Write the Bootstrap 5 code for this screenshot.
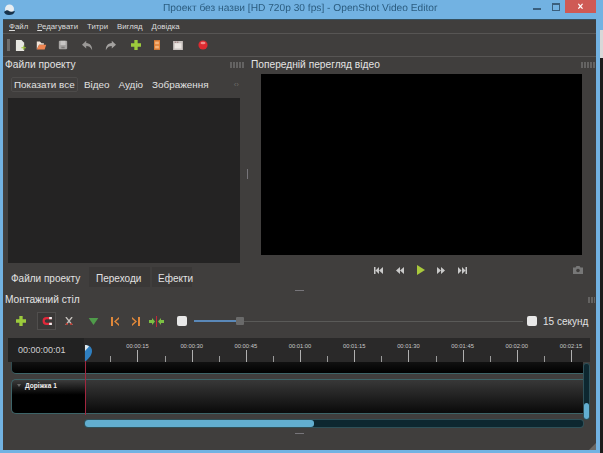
<!DOCTYPE html>
<html lang="uk">
<head>
  <meta charset="UTF-8">
  <meta name="viewport" content="width=device-width, initial-scale=1.0">
  <title>OpenShot Video Editor</title>
  <link href="https://cdn.jsdelivr.net/npm/bootstrap@5.3.0/dist/css/bootstrap.min.css" rel="stylesheet">
  <style>
    html, body { height: 100%; }
    body {
      background: #72b2e2;
      font-family: "Liberation Sans", "Noto Sans", sans-serif;
      color: #e2e2e2;
      overflow: hidden;
      width: 603px;
      height: 453px;
    }
    .side-strip {
      width: 3px;
      height: 453px;
      background: linear-gradient(#72b2e2 0 30px, #d8d8d8 30px 58px, #1c1c1c 58px);
    }
    .win { width: 600px; height: 453px; filter: blur(.35px); }
    .titlebar { height: 19px; padding-left: 3px; padding-right: 4px; }
    .win-title {
      font-size: 10.2px;
      text-rendering: geometricPrecision;
      line-height: 18px;
      color: #2c5d80;
      padding-left: 147px;
      white-space: nowrap;
    }
    .win-btn-min { width: 8px; height: 2px; background: #3a5f7d; margin: 8px 11px 0 0; }
    .win-btn-max { width: 8px; height: 8px; border: 1px solid #3a5f7d; border-top-width: 2px; margin: 3px 5px 0 0; }
    .win-btn-close {
      width: 31px; height: 13px; background: #cf5a55; color: #fff;
      font-size: 10px; line-height: 13px; font-weight: 700;
    }
    .shell {
      width: 593px;
      height: 431px;
      margin-left: 3px;
      background: #403e3d;
      position: relative;
      border-top: 1px solid #35505f;
    }
    .menu-row { height: 14px; gap: 9px; padding-left: 6px; font-size: 7.8px; line-height: 14px; border-bottom: 1px solid #575554; color: #dcdcdc; }
    .menu-row u { text-underline-offset: 1px; }
    .tool-row { height: 23px; border-bottom: 1px solid #575554; position: relative; }
    .grip { width: 3px; height: 12px; background: #6e6c6a; margin-left: 4px; }
    .tool-slot { width: 21px; height: 14px; align-items: center; }
    .tool-gap { margin-left: 2px; }
    .docks { height: 233px; }
    .dock-left { width: 242px; }
    .dock-sep { width: 4px; }
    .dock-sep-mark { width: 1px; height: 10px; background: #77757a; }
    .dock-right { width: 347px; }
    .dock-head { height: 14px; padding-top: 2px; font-size: 10.2px; line-height: 12px; padding-left: 2px; color: #e4e4e4; white-space: nowrap; }
    .float-marks { width: 14px; height: 6px; opacity: .4; margin-right: 1px;
      background: repeating-linear-gradient(90deg, #9a9a9a 0 2px, transparent 2px 3px); }
    .float-one { width: 7px; margin-top: -1px; }
    .filter-row { margin: 6px 0 0 8px; height: 15px; gap: 6px; font-size: 9.9px; line-height: 15px; white-space: nowrap; }
    .filter-on { width: 67px; border: 1px solid #4d4b4a; border-radius: 2px; padding: 0 2px; line-height: 13px; }
    .filter-tab { margin-left: 3px; }
    .filter-more { color: #6c6a68; font-size: 8px; margin-right: 6px; }
    .files-box { margin: 6px 0 0 5px; width: 232px; height: 165px; background: #242323; }
    .tab-row { margin-left: 5px; height: 24px; font-size: 10px; }
    .tab-item { margin-top: 4px; padding: 5px 6px 0; line-height: 14px; white-space: nowrap; height: 20px; }
    .tab-on { width: 81px; padding-left: 3px; }
    .tab-other { background: #3a3837; }
    .tab-two { width: 61px; padding-left: 7px; }
    .tab-three { width: 40px; margin-left: 2px; }
    .video-box { margin: 3px 0 0 12px; width: 321px; height: 181px; background: #000; }
    .player-row { height: 16px; margin-top: 7px; position: relative; }
    .player-btns { margin-left: 125px; gap: 12px; }
    .cam-slot { margin-left: auto; margin-right: 13px; }
    .hsplit { height: 1px; width: 9px; background: #77757a; margin: 0 auto; }
    .handle-row { height: 3px; }
    .tl-head { height: 14px; margin-top: -1px; padding-top: 2px; font-size: 10.2px; line-height: 12px; padding-left: 2px; color: #e4e4e4; }
    .tl-tools { height: 20px; margin-top: 5px; padding-left: 7px; }
    .tl-slot { width: 21px; height: 18px; }
    .tl-slot-on { border: 1px solid #504e4d; background: #3a3837; width: 19px; margin: 0 2px 0 6px; }
    .zoom-knob { width: 10px; height: 10px; background: #e8e8e8; border-radius: 2px; }
    .zoom-first { margin-left: 10px; }
    .zoom-line { height: 1px; background: #5a5a58; }
    .zoom-fill { height: 2px; width: 42px; background: #5a88b8; margin-left: 7px; }
    .zoom-thumb { width: 8px; height: 8px; background: #6a6a6a; border-radius: 1px; }
    .zoom-rest { width: 279px; }
    .zoom-txt { font-size: 10px; margin-left: 6px; white-space: nowrap; }
    .timeline { margin: 7px 0 0 5px; width: 582px; position: relative; }
    .tl-ruler { height: 24px; background: #2a2929; }
    .time-box { width: 77px; background: #222; font-size: 9px; line-height: 24px; padding-left: 10px; color: #cfcfcf; }
    .ruler-cells { padding-left: 26.500px; overflow: hidden; }
    .r-cell { width: 54.2px; flex: none; position: relative; height: 24px; }
    .r-label { font-size: 5.8px; line-height: 9px; padding-top: 4px; text-align: center; color: #c8c8c8; }
    .r-major { width: 1px; height: 12px; background: #b0b0b0; position: absolute; left: 27px; top: 12px; }
    .r-minor { width: 1px; height: 6px; background: #9a9a9a; position: absolute; left: 0; top: 18px; }
    .tl-body { height: 58px; margin-left: 3px; }
    .tl-tracks { width: 572px; }
    .t-top { height: 12px; background: linear-gradient(#111, #000); border-bottom: 1px solid #3d6468; border-left: 1px solid #2f4c50; border-bottom-left-radius: 5px; }
    .t-track { height: 35px; margin-top: 5px; border: 1px solid #3d6468; border-right: 0; border-radius: 5px 0 0 5px; background: linear-gradient(#383838, #0a0a0a); }
    .t-name { width: 73px; height: 100%; background: linear-gradient(#3c3c3c, #000 45%); font-size: 6.6px; font-weight: 700; line-height: 11px; padding-left: 5px; color: #eee; border-radius: 5px 0 0 5px; gap: 4px; }
    .t-arrow { margin-top: 4px; }
    .vbar { width: 7px; height: 57px; margin-top: 1px; background: #0d2730; border: 1px solid #2f5058; border-radius: 3px; }
    .vbar-thumb { height: 16px; background: #62aed0; border-radius: 3px; }
    .hbar { margin-left: 77px; width: 498px; height: 7px; background: #0d2730; box-shadow: 0 0 0 1px #2f5058; border-radius: 3px; }
    .hbar-thumb { width: 229px; background: #62aed0; border-radius: 3px; }
    .playhead { position: absolute; left: 77px; top: 9px; width: 1px; height: 68px; background: #a3263f; }
    .playhead-tip { position: absolute; left: 77px; top: 7px; }
    .size-grip { position: absolute; right: 0; bottom: 0; width: 0; height: 0; border-left: 7px solid transparent; border-bottom: 7px solid #6a6866; }
    .bottom-mark { margin-top: 6px; }
  </style>
</head>
<body class="d-flex">
  <div class="win d-flex flex-column">
    <div class="titlebar d-flex">
      <svg width="13" height="13" viewBox="0 0 13 13" class="mt-1"><circle cx="6.5" cy="5" r="4.5" fill="#e8eef2"/><path d="M1 8c2-2 4-2 5-1s3 1 6 0c-1 3-3 4-6 4S2 10 1 8z" fill="#17324a"/></svg>
      <div class="win-title flex-grow-1">Проект без назви [HD 720p 30 fps] - OpenShot Video Editor</div>
      <div class="win-btn-min"></div>
      <div class="win-btn-max"></div>
      <div class="win-btn-close text-center">×</div>
    </div>

    <div class="shell d-flex flex-column">
      <div class="menu-row d-flex">
        <span><u>Ф</u>айл</span><span><u>Р</u>едагувати</span><span>Титри</span><span>Вигляд</span><span>Довідка</span>
      </div>

      <div class="tool-row d-flex align-items-center">
        <div class="grip"></div>
        <div class="tool-slot d-flex justify-content-center">
          <svg width="11" height="13" viewBox="0 0 12 14"><path d="M1 1h6l3 3v9H1z" fill="#e6e6e0"/><path d="M7 9h2V7h1v2h2v1h-2v2H9v-2H7z" fill="#9cc43a"/></svg>
        </div>
        <div class="tool-slot d-flex justify-content-center">
          <svg width="11" height="11" viewBox="0 0 14 14"><path d="M1 12V2h4l2 2h3v2H4z" fill="#f0e4d8"/><path d="M1 12l3-6h9l-2 6z" fill="#ee8450"/></svg>
        </div>
        <div class="tool-slot d-flex justify-content-center">
          <svg width="10" height="10" viewBox="0 0 12 12"><rect x="1" y="1" width="10" height="10" rx="1" fill="#a8a6a4"/><rect x="3" y="1" width="6" height="5" fill="#c8c6c4"/><rect x="4" y="8" width="4" height="2" fill="#807e7c"/></svg>
        </div>
        <div class="tool-slot d-flex justify-content-center ms-1">
          <svg width="13" height="11" viewBox="0 0 15 13"><path d="M6 1L1 5.500 6 10V7c3 0 5 1 7 5 0-5-2-8-7-8.500z" fill="#9a9896"/></svg>
        </div>
        <div class="tool-slot d-flex justify-content-center tool-gap">
          <svg width="13" height="11" viewBox="0 0 15 13"><path d="M9 1l5 4.500L9 10V7c-3 0-5 1-7 5 0-5 2-8 7-8.500z" fill="#a4a2a0"/></svg>
        </div>
        <div class="tool-slot d-flex justify-content-center ms-1">
          <svg width="10" height="10" viewBox="0 0 12 12"><path d="M4 0h4v4h4v4H8v4H4V8H0V4h4z" fill="#9ccb3c"/></svg>
        </div>
        <div class="tool-slot d-flex justify-content-center">
          <svg width="6" height="10" viewBox="0 0 8 13"><rect width="8" height="13" fill="#e07f36"/><rect x="1.500" y="2" width="5" height="3.500" fill="#f3b27a"/><rect x="1.500" y="7.500" width="5" height="3.500" fill="#f3b27a"/></svg>
        </div>
        <div class="tool-slot d-flex justify-content-center">
          <svg width="10" height="9" viewBox="0 0 13 12"><rect width="13" height="12" fill="#c9c3c0"/><rect x="2" y="3" width="9" height="7" fill="#ece6e2"/><rect x="2" y="1" width="2" height="1" fill="#8c5a5a"/><rect x="5" y="1" width="2" height="1" fill="#8c5a5a"/></svg>
        </div>
        <div class="tool-slot d-flex justify-content-center ms-1">
          <svg width="10" height="10" viewBox="0 0 12 12"><circle cx="6" cy="6" r="5.500" fill="#dd2a30"/><ellipse cx="6" cy="3.500" rx="3" ry="1.500" fill="#f08a88"/></svg>
        </div>
      </div>

      <div class="docks d-flex">
        <div class="dock-left">
          <div class="dock-head d-flex justify-content-between align-items-center">
            <span>Файли проекту</span>
            <span class="float-marks"></span>
          </div>
          <div class="filter-row d-flex">
            <span class="filter-on">Показати все</span><span>Відео</span><span class="filter-tab">Аудіо</span><span class="filter-tab">Зображення</span><span class="filter-more ms-auto">‹›</span>
          </div>
          <div class="files-box"></div>
          <div class="tab-row d-flex">
            <div class="tab-item tab-on">Файли проекту</div>
            <div class="tab-item tab-other tab-two">Переходи</div>
            <div class="tab-item tab-other tab-three">Ефекти</div>
          </div>
        </div>
        <div class="dock-sep d-flex align-items-center justify-content-center"><div class="dock-sep-mark"></div></div>
        <div class="dock-right">
          <div class="dock-head d-flex justify-content-between align-items-center">
            <span>Попередній перегляд відео</span>
            <span class="float-marks"></span>
          </div>
          <div class="video-box"></div>
          <div class="player-row d-flex align-items-center">
            <div class="player-btns d-flex align-items-center">
              <svg width="9" height="7" viewBox="0 0 9 7"><path d="M0 0h1.500v7H0zM5 0v7L1.500 3.500zM9 0v7L5 3.500z" fill="#c9c9c9"/></svg>
              <svg width="9" height="7" viewBox="0 0 9 7"><path d="M5 0v7L1 3.500zM9 0v7L5 3.500z" fill="#c9c9c9"/></svg>
              <svg width="9" height="10" viewBox="0 0 9 10"><path d="M1 0l8 5-8 5z" fill="#a9c93c"/></svg>
              <svg width="9" height="7" viewBox="0 0 9 7"><path d="M0 0l4 3.500L0 7zM4 0l4 3.500L4 7z" fill="#c9c9c9"/></svg>
              <svg width="9" height="7" viewBox="0 0 9 7"><path d="M0 0l3.500 3.500L0 7zM4 0l3.500 3.500L4 7zM7.500 0H9v7H7.500z" fill="#c9c9c9"/></svg>
            </div>
            <svg class="cam-slot" width="10" height="8" viewBox="0 0 10 8"><path d="M0 1.500h2.500L3.500 0h3l1 1.500H10V8H0z" fill="#777"/><circle cx="5" cy="4.500" r="1.800" fill="#403e3d"/></svg>
          </div>
        </div>
      </div>

      <div class="handle-row"><div class="hsplit"></div></div>

      <div class="tl-head d-flex justify-content-between align-items-center">
        <span>Монтажний стіл</span>
        <span class="float-marks float-one"></span>
      </div>

      <div class="tl-tools d-flex align-items-center">
        <div class="tl-slot d-flex align-items-center justify-content-center">
          <svg width="10" height="10" viewBox="0 0 12 12"><path d="M4 0h4v4h4v4H8v4H4V8H0V4h4z" fill="#9ccb3c"/></svg>
        </div>
        <div class="tl-slot tl-slot-on d-flex align-items-center justify-content-center">
          <svg width="10" height="8" viewBox="0 0 11 9"><path d="M11 0H5a4.500 4.500 0 0 0 0 9h6V6.500H5a2 2 0 0 1 0-4h6z" fill="#e0283a"/><path d="M8 0h3v2.500H8zM8 6.500h3V9H8z" fill="#eee"/></svg>
        </div>
        <div class="tl-slot d-flex align-items-center justify-content-center">
          <svg width="8" height="8" viewBox="0 0 9 9"><path d="M1 0l7 9M8 0L1 9" stroke="#c4c0bc" stroke-width="1.500"/><circle cx="2" cy="8" r="1.200" fill="#c0392f"/><circle cx="7" cy="8" r="1.200" fill="#c0392f"/></svg>
        </div>
        <div class="tl-slot d-flex align-items-center justify-content-center ms-1">
          <svg width="11" height="7" viewBox="0 0 11 8"><path d="M0 0h11L5.500 8z" fill="#4f9b4a"/></svg>
        </div>
        <div class="tl-slot d-flex align-items-center justify-content-center">
          <svg width="8" height="9" viewBox="0 0 8 9"><path d="M0 0h2v9H0zM8 0v2L5 4.500 8 7v2L3 4.500z" fill="#e0883a"/></svg>
        </div>
        <div class="tl-slot d-flex align-items-center justify-content-center">
          <svg width="8" height="9" viewBox="0 0 8 9"><path d="M8 0H6v9h2zM0 0v2l3 2.500L0 7v2l5-4.500z" fill="#e0883a"/></svg>
        </div>
        <div class="tl-slot d-flex align-items-center justify-content-center">
          <svg width="15" height="11" viewBox="0 0 15 11"><path d="M0 4h3V2l3 3.500L3 9V7H0zM15 4h-3V2L9 5.500 12 9V7h3z" fill="#7cc043"/><rect x="7" width="1" height="11" fill="#c02838"/></svg>
        </div>
        <div class="zoom-knob zoom-first"></div>
        <div class="zoom-fill"></div>
        <div class="zoom-thumb"></div>
        <div class="zoom-line zoom-rest"></div>
        <div class="zoom-knob ms-1"></div>
        <div class="zoom-txt">15 секунд</div>
      </div>

      <div class="timeline">
        <div class="tl-ruler d-flex">
          <div class="time-box flex-none">00:00:00:01</div>
          <div class="ruler-cells d-flex">
            <div class="r-cell"><div class="r-label">00:00:15</div><div class="r-minor"></div><div class="r-major"></div></div>
            <div class="r-cell"><div class="r-label">00:00:30</div><div class="r-minor"></div><div class="r-major"></div></div>
            <div class="r-cell"><div class="r-label">00:00:45</div><div class="r-minor"></div><div class="r-major"></div></div>
            <div class="r-cell"><div class="r-label">00:01:00</div><div class="r-minor"></div><div class="r-major"></div></div>
            <div class="r-cell"><div class="r-label">00:01:15</div><div class="r-minor"></div><div class="r-major"></div></div>
            <div class="r-cell"><div class="r-label">00:01:30</div><div class="r-minor"></div><div class="r-major"></div></div>
            <div class="r-cell"><div class="r-label">00:01:45</div><div class="r-minor"></div><div class="r-major"></div></div>
            <div class="r-cell"><div class="r-label">00:02:00</div><div class="r-minor"></div><div class="r-major"></div></div>
            <div class="r-cell"><div class="r-label">00:02:15</div><div class="r-minor"></div><div class="r-major"></div></div>
          </div>
        </div>
        <div class="tl-body d-flex">
          <div class="tl-tracks">
            <div class="t-top"></div>
            <div class="t-track d-flex">
              <div class="t-name d-flex">
                <svg class="t-arrow" width="4" height="3" viewBox="0 0 4 3"><path d="M0 0h4L2 3z" fill="#666"/></svg>
                <span>Доріжка 1</span>
              </div>
            </div>
          </div>
          <div class="vbar d-flex flex-column justify-content-end"><div class="vbar-thumb"></div></div>
        </div>
        <div class="hbar d-flex"><div class="hbar-thumb"></div></div>
        <div class="playhead"></div>
        <svg class="playhead-tip" width="8" height="16" viewBox="0 0 8 16"><path d="M0 0c4 0 7 2 7 6 0 4-3 7-6 10H0z" fill="#2f7fc0"/><path d="M0 0c2 0 3 .5 4 1.500L0 6z" fill="#dfe8ee"/></svg>
      </div>

      <div class="bottom-mark"><div class="hsplit"></div></div>
      <div class="size-grip"></div>
    </div>
  </div>
  <div class="side-strip"></div>
  <script src="https://cdn.jsdelivr.net/npm/bootstrap@5.3.0/dist/js/bootstrap.bundle.min.js"></script>
</body>
</html>
